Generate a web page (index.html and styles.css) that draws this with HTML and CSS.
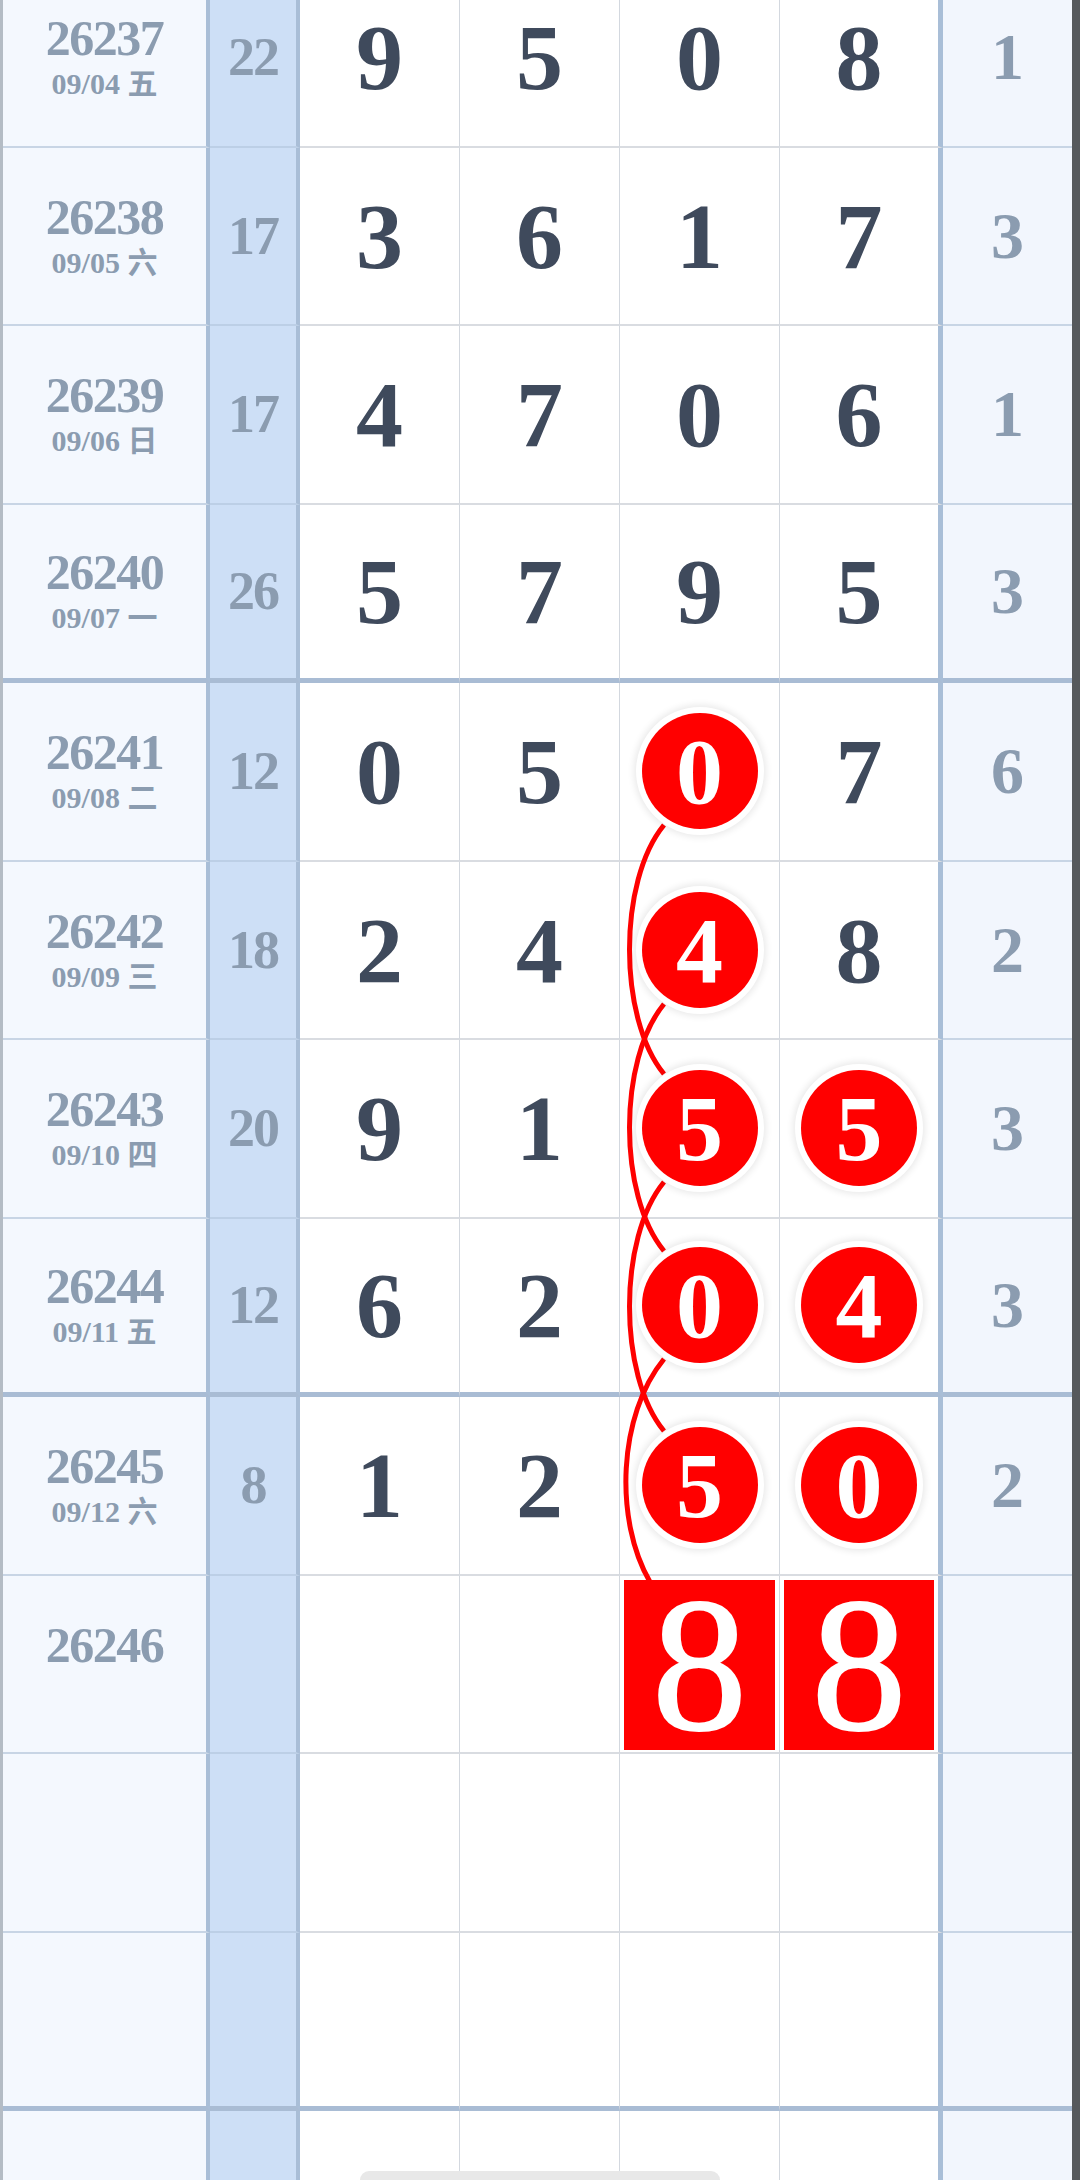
FILE: index.html
```html
<!DOCTYPE html>
<html lang="zh">
<head>
    <meta charset="UTF-8">
    <meta name="viewport" content="width=device-width, initial-scale=1.0">
    <title>走势图</title>
    <link rel="stylesheet" href="styles.css">
</head>
<body>
    <div class="board">
        <div class="row">
            <div class="c issue"><b>26237</b><span>09/04 五</span></div>
            <div class="c sum">22</div>
            <div class="c d">9</div><div class="c d">5</div><div class="c d">0</div><div class="c d d4">8</div>
            <div class="c right">1</div>
        </div>
        <div class="row">
            <div class="c issue"><b>26238</b><span>09/05 六</span></div>
            <div class="c sum">17</div>
            <div class="c d">3</div><div class="c d">6</div><div class="c d">1</div><div class="c d d4">7</div>
            <div class="c right">3</div>
        </div>
        <div class="row">
            <div class="c issue"><b>26239</b><span>09/06 日</span></div>
            <div class="c sum">17</div>
            <div class="c d">4</div><div class="c d">7</div><div class="c d">0</div><div class="c d d4">6</div>
            <div class="c right">1</div>
        </div>
        <div class="row end">
            <div class="c issue"><b>26240</b><span>09/07 一</span></div>
            <div class="c sum">26</div>
            <div class="c d">5</div><div class="c d">7</div><div class="c d">9</div><div class="c d d4">5</div>
            <div class="c right">3</div>
        </div>

        <div class="row">
            <div class="c issue"><b>26241</b><span>09/08 二</span></div>
            <div class="c sum">12</div>
            <div class="c d">0</div><div class="c d">5</div><div class="c d"><span class="ball">0</span></div><div class="c d d4">7</div>
            <div class="c right">6</div>
        </div>
        <div class="row">
            <div class="c issue"><b>26242</b><span>09/09 三</span></div>
            <div class="c sum">18</div>
            <div class="c d">2</div><div class="c d">4</div><div class="c d"><span class="ball">4</span></div><div class="c d d4">8</div>
            <div class="c right">2</div>
        </div>
        <div class="row">
            <div class="c issue"><b>26243</b><span>09/10 四</span></div>
            <div class="c sum">20</div>
            <div class="c d">9</div><div class="c d">1</div><div class="c d"><span class="ball">5</span></div><div class="c d d4"><span class="ball">5</span></div>
            <div class="c right">3</div>
        </div>
        <div class="row end">
            <div class="c issue"><b>26244</b><span>09/11 五</span></div>
            <div class="c sum">12</div>
            <div class="c d">6</div><div class="c d">2</div><div class="c d"><span class="ball">0</span></div><div class="c d d4"><span class="ball">4</span></div>
            <div class="c right">3</div>
        </div>

        <div class="row">
            <div class="c issue"><b>26245</b><span>09/12 六</span></div>
            <div class="c sum">8</div>
            <div class="c d">1</div><div class="c d">2</div><div class="c d"><span class="ball">5</span></div><div class="c d d4"><span class="ball">0</span></div>
            <div class="c right">2</div>
        </div>
        <div class="row">
            <div class="c issue"><b>26246</b><span>&nbsp;</span></div>
            <div class="c sum"></div>
            <div class="c d"></div><div class="c d"></div>
            <div class="c d pick"><span class="guess">8</span></div>
            <div class="c d d4 pick"><span class="guess">8</span></div>
            <div class="c right"></div>
        </div>
        <div class="row">
            <div class="c issue"></div><div class="c sum"></div>
            <div class="c d"></div><div class="c d"></div><div class="c d"></div><div class="c d d4"></div>
            <div class="c right"></div>
        </div>
        <div class="row end">
            <div class="c issue"></div><div class="c sum"></div>
            <div class="c d"></div><div class="c d"></div><div class="c d"></div><div class="c d d4"></div>
            <div class="c right"></div>
        </div>
        <div class="row">
            <div class="c issue"></div><div class="c sum"></div>
            <div class="c d"></div><div class="c d"></div><div class="c d"></div><div class="c d d4"></div>
            <div class="c right"></div>
        </div>

        <!-- link lines between the hits in the third column -->
        <svg class="links" width="1080" height="1700" viewBox="0 0 1080 1700">
            <g fill="none" stroke="#ff0000" stroke-width="5">
                <path d="M664,825 C618,881 618,1018 664,1074"/>
                <path d="M664,1004 C618,1060 618,1195 664,1251"/>
                <path d="M664,1182 C618,1238 618,1375 664,1431"/>
                <path d="M664,1359 C618,1415 614,1520 650,1582"/>
            </g>
        </svg>
    </div>

    <div class="scrollbar"></div>
</body>
</html>
```

FILE: styles.css
```css
body {
    margin: 0;
    padding: 0;
    background: #fff;
    height: 2180px;
    overflow: hidden;
    font-family: "Liberation Serif", "Noto Sans CJK SC", serif;
}

.board {
    position: relative;
    width: 1080px;
    box-sizing: border-box;
    margin-top: -31px;
    border-left: 3px solid #b4bcc5;
    border-right: 8px solid #56595c;
}

.row {
    display: grid;
    grid-template-columns: 207px 90px 160px 160px 160px 163px 129px;
    grid-template-rows: 178.5px;
    height: 178.5px;
}

.c {
    box-sizing: border-box;
    display: flex;
    align-items: center;
    justify-content: center;
    min-height: 0;
    border-bottom: 2px solid #d9dce1;
    font-weight: bold;
}

.issue {
    flex-direction: column;
    background: #f4f8fe;
    border-right: 4px solid #a9bed7;
    border-bottom-color: #c8d5e5;
    color: #8b9cb0;
}

.issue b {
    font-size: 50px;
    line-height: 50px;
    letter-spacing: -1.5px;
}

.issue span {
    margin-top: 4px;
    font-size: 30px;
    line-height: 34px;
}

.sum {
    background: #cddff6;
    border-right: 4px solid #a9bed7;
    border-bottom-color: #bccfe6;
    color: #8b9cb0;
    font-size: 54px;
    letter-spacing: -2px;
}

.d {
    background: #fff;
    border-right: 1px solid #d3d8df;
    color: #3f4a5c;
    font-size: 94px;
}

.d4 {
    border-right: 5px solid #a9bed7;
}

.right {
    background: #f2f6fd;
    border-bottom-color: #c8d5e5;
    color: #8b9cb0;
    font-size: 66px;
}

.row.end .c {
    border-bottom: 5px solid #a9bcd4;
}

.ball {
    position: relative;
    z-index: 2;
    display: flex;
    align-items: center;
    justify-content: center;
    width: 116px;
    height: 116px;
    border-radius: 50%;
    background: #ff0000;
    color: #fff;
    line-height: 1;
    box-shadow: 0 0 0 6px #fff, 0 0 7px 8px rgba(0, 0, 0, 0.09);
}

.d.pick {
    padding: 4px 4px 2px;
    align-items: stretch;
}

.guess {
    position: relative;
    z-index: 2;
    flex: 1;
    display: flex;
    align-items: center;
    justify-content: center;
    background: #ff0000;
    color: #fff;
    font-weight: normal;
    font-size: 190px;
    line-height: 150px;
    -webkit-text-stroke: 2px #fff;
}

.links {
    position: absolute;
    left: -3px;
    top: 31px;
    z-index: 1;
    pointer-events: none;
}

.scrollbar {
    position: fixed;
    left: 360px;
    top: 2171px;
    width: 360px;
    height: 18px;
    border-radius: 9px;
    background: #e8e8e8;
}
```
